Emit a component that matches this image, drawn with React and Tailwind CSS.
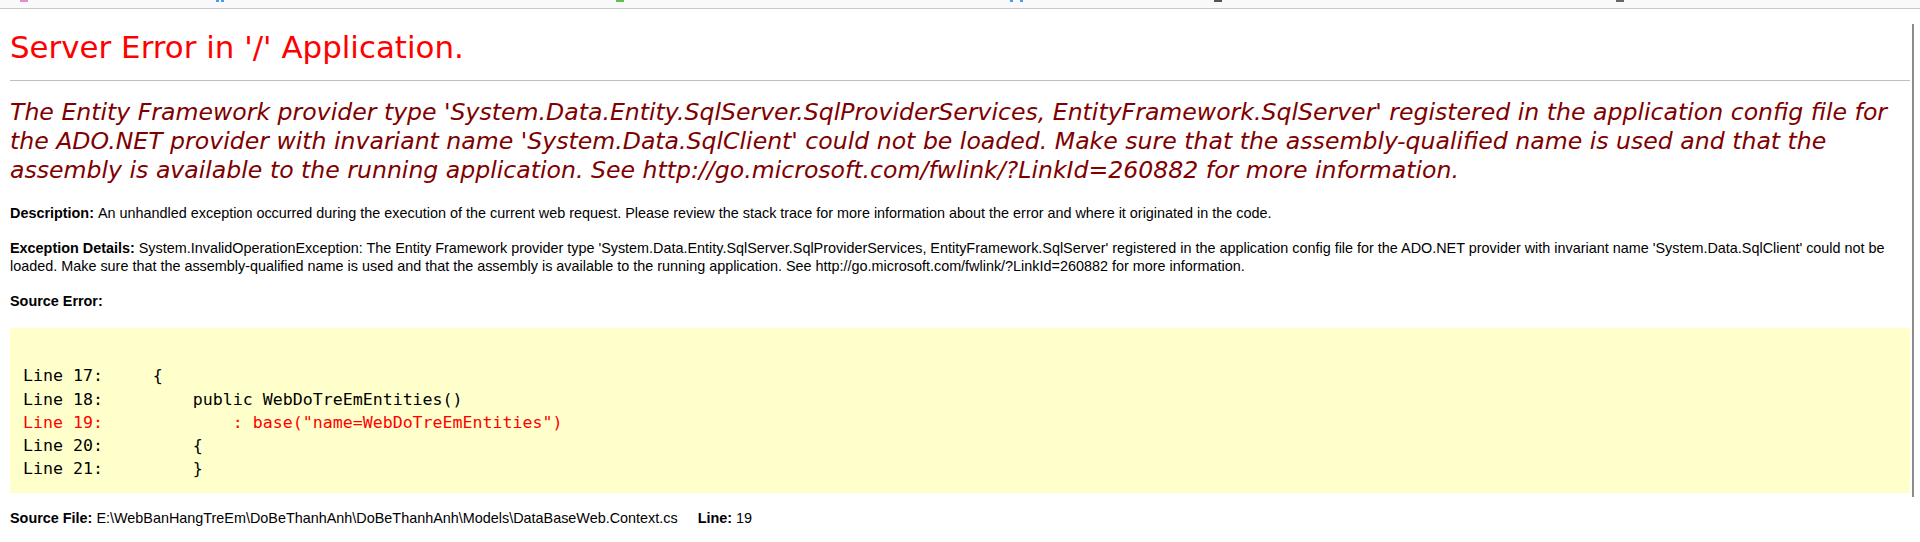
import React from "react";

const codeLines = [
  { text: "Line 17:     {", error: false },
  { text: "Line 18:         public WebDoTreEmEntities()", error: false },
  { text: 'Line 19:             : base("name=WebDoTreEmEntities")', error: true },
  { text: "Line 20:         {", error: false },
  { text: "Line 21:         }", error: false },
];

// bits of the bookmark icons cut off at the top of the window
const TopStrip = () => (
  <div className="h-[9px] bg-[#f8f9fa] border-b border-[#c8c8c8] flex items-start">
    <span className="ml-[20px] w-[8px] h-[2px] bg-[#e58bc9]" />
    <span className="ml-[188px] w-[3px] h-[2px] bg-[#4a9af5]" />
    <span className="ml-[2px] w-[3px] h-[2px] bg-[#4a9af5]" />
    <span className="ml-[392px] w-[8px] h-[2px] bg-[#5cc24a]" />
    <span className="ml-[386px] w-[3px] h-[2px] bg-[#4a9af5]" />
    <span className="ml-[7px] w-[3px] h-[2px] bg-[#4a9af5]" />
    <span className="ml-[191px] w-[8px] h-[2px] bg-[#555555]" />
    <span className="ml-[394px] w-[8px] h-[2px] bg-[#666666]" />
  </div>
);

export default function App() {
  return (
    <div className="relative min-h-[542px] bg-white overflow-hidden text-black">
      <TopStrip />

      <div className="px-[10px]">
        <h1 className="mt-[20px] text-[30.9px] leading-[36px] font-normal text-[#ff0000] font-['DejaVu_Sans',sans-serif]">
          Server Error in '/' Application.
        </h1>
        <div className="mt-[15px] h-px bg-[#c0c0c0]" />

        <h2 className="mt-[17px] text-[23.6px] leading-[29px] italic font-normal text-[#800000] font-['DejaVu_Sans',sans-serif]">
          The Entity Framework provider type 'System.Data.Entity.SqlServer.SqlProviderServices, EntityFramework.SqlServer' registered in the application config file for
          <br />
          the ADO.NET provider with invariant name 'System.Data.SqlClient' could not be loaded. Make sure that the assembly-qualified name is used and that the
          <br />
          assembly is available to the running application. See http://go.microsoft.com/fwlink/?LinkId=260882 for more information.
        </h2>

        <div className="mt-[20px] text-[14.4px] leading-[17.6px] font-['Liberation_Sans',Arial,sans-serif]">
          <p>
            <b>Description: </b>
            An unhandled exception occurred during the execution of the current web request. Please review the stack trace for more information about the error and where it originated in the code.
          </p>
          <p className="mt-[17.6px]">
            <b>Exception Details: </b>
            System.InvalidOperationException: The Entity Framework provider type 'System.Data.Entity.SqlServer.SqlProviderServices, EntityFramework.SqlServer' registered in the application config file for the ADO.NET provider with invariant name 'System.Data.SqlClient' could not be loaded. Make sure that the assembly-qualified name is used and that the assembly is available to the running application. See http://go.microsoft.com/fwlink/?LinkId=260882 for more information.
          </p>
          <p className="mt-[17.6px]">
            <b>Source Error:</b>
          </p>
        </div>

        <div className="mt-[17.6px] bg-[#ffffcc] pl-[13px] py-[13px] text-[16.6px] leading-[23.2px] font-['DejaVu_Sans_Mono',monospace]">
          <div className="h-[23.2px]" />
          {codeLines.map((line) => (
            <div
              key={line.text}
              className={`whitespace-pre ${line.error ? "text-[#ff0000]" : "text-black"}`}
            >
              {line.text}
            </div>
          ))}
        </div>

        <p className="mt-[17px] text-[14.4px] leading-[17.6px] font-['Liberation_Sans',Arial,sans-serif]">
          <b>Source File: </b>
          {"E:\\WebBanHangTreEm\\DoBeThanhAnh\\DoBeThanhAnh\\Models\\DataBaseWeb.Context.cs"}
          <b className="whitespace-pre">{"     Line: "}</b>
          19
        </p>
      </div>

      {/* scrollbar thumb */}
      <div className="absolute left-[1912px] top-[24px] w-[2px] h-[473px] bg-[#8c8c8c]" />
    </div>
  );
}
